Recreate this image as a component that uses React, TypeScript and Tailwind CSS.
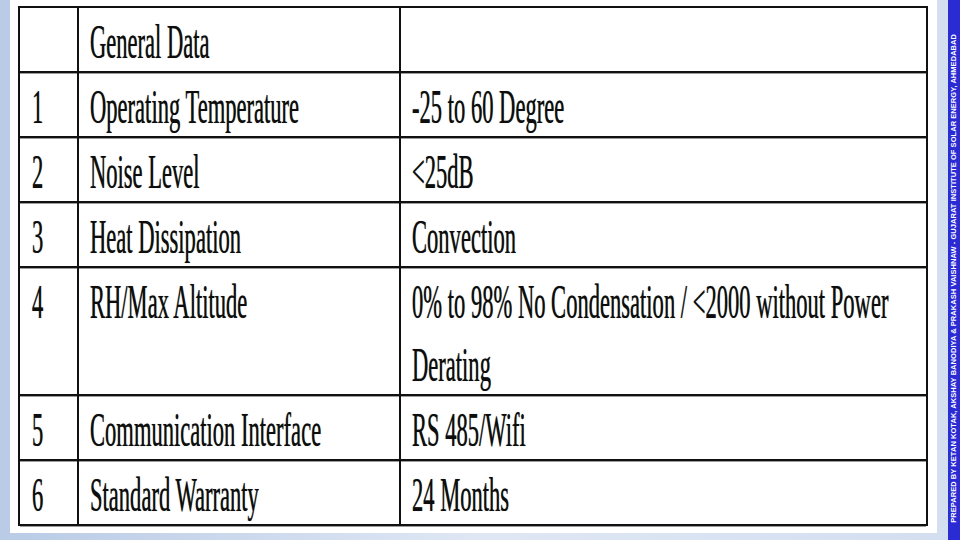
const rows: { n: string; name: string; value: string[] }[] = [
  { n: "", name: "General Data", value: [""] },
  { n: "1", name: "Operating Temperature", value: ["-25 to 60 Degree"] },
  { n: "2", name: "Noise Level", value: ["<25dB"] },
  { n: "3", name: "Heat Dissipation", value: ["Convection"] },
  { n: "4", name: "RH/Max Altitude", value: ["0% to 98% No Condensation / <2000 without Power", "Derating"] },
  { n: "5", name: "Communication Interface", value: ["RS 485/Wifi"] },
  { n: "6", name: "Standard Warranty", value: ["24 Months"] },
];

function Txt({ children }: { children: React.ReactNode }) {
  return (
    <span className="block whitespace-nowrap origin-left scale-x-[0.47] translate-y-[2px] font-['Liberation_Serif','Times_New_Roman',serif] text-[48px] leading-[63px] text-[#0d0d0d] [text-shadow:0_0_1px_#666]">
      {children}
    </span>
  );
}

export default function App() {
  return (
    <div className="w-[960px] h-[540px] flex overflow-hidden bg-gradient-to-r from-[#b9cbe6] via-[#dfe7f4] to-[#d3def0]">
      <div className="ml-[10px] w-[927px] h-[533px] bg-white pt-[6px] pl-[8px]">
        <div className="w-[910px] border-2 border-[#111] border-b-0">
          {rows.map((r, i) => (
            <div key={i} className="flex border-b-2 border-[#111] shadow-[0_1px_0_#9c9c9c]">
              <div className="w-[59px] min-w-0 border-r-2 border-[#111] pl-[12px] overflow-hidden">
                <Txt>{r.n || "\u00a0"}</Txt>
              </div>
              <div className="w-[322px] min-w-0 border-r-2 border-[#111] pl-[11px] overflow-hidden">
                <Txt>{r.name}</Txt>
              </div>
              <div className="flex-1 min-w-0 pl-[11px] overflow-hidden">
                {r.value.map((v, j) => (
                  <Txt key={j}>{v || "\u00a0"}</Txt>
                ))}
              </div>
            </div>
          ))}
        </div>
      </div>
      <div className="ml-[11px] w-[12px] h-full bg-[#2b2bd4] flex flex-col justify-end items-center pb-[17px]">
        <span className="[writing-mode:vertical-rl] rotate-180 whitespace-nowrap text-white font-bold font-['Liberation_Sans',Arial,sans-serif] text-[7.5px] leading-[12px] tracking-[0.05px]">
          PREPARED BY KETAN KOTAK, AKSHAY BANODIYA &amp; PRAKASH VAISHNAW - GUJARAT INSTITUTE OF SOLAR ENERGY, AHMEDABAD
        </span>
      </div>
    </div>
  );
}
